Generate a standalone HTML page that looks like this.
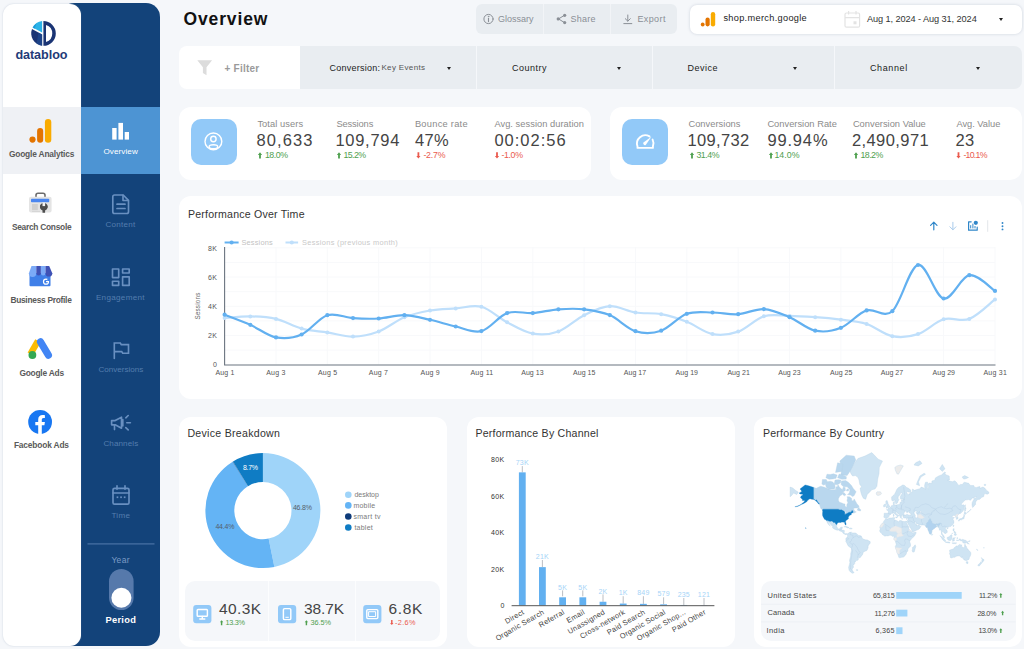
<!DOCTYPE html>
<html>
<head>
<meta charset="utf-8">
<title>Overview</title>
<style>
*{box-sizing:border-box;margin:0;padding:0}
html,body{width:1024px;height:649px;overflow:hidden}
body{background:#f5f7fa;font-family:"Liberation Sans",sans-serif;position:relative;color:#333}
.abs{position:absolute}
.t{position:absolute;white-space:nowrap;line-height:1}
.card{position:absolute;background:#fff;border-radius:12px}
/* sidebars */
#navblue{left:60px;top:3px;width:100px;height:643px;background:#13437a;border-radius:14px}
#navwhite{left:3px;top:4px;width:78px;height:642px;background:#fff;border-radius:11px;box-shadow:0 0 2px rgba(120,140,170,.35)}
#gaSel{left:3px;top:107px;width:78px;height:67px;background:#eff1f5}
#ovSel{left:81px;top:107px;width:79px;height:67px;background:#4d94d3}
.wl{font-size:7.5px;font-weight:bold;color:#555;text-align:center;width:78px;left:3px;letter-spacing:.1px}
.bl{font-size:7.5px;color:#4a6f9e;text-align:center;width:79px;left:81px;letter-spacing:.1px}
/* top */
#title{left:183px;top:10px;font-size:17.5px;font-weight:bold;color:#111;letter-spacing:.2px}
#btns{left:476px;top:4px;width:201px;height:30px;background:#e9edf1;border-radius:6px}
.bt{font-size:9px;color:#8a8f96;top:14.5px;letter-spacing:.15px}
#prop{left:690px;top:5px;width:332px;height:29px;background:#fff;border-radius:7px;box-shadow:0 0 3px rgba(150,165,185,.45)}
/* filter */
#fwhite{left:179px;top:46px;width:121px;height:43px;background:#fff;border-radius:8px 0 0 8px}
#fgrey{left:300px;top:46px;width:722px;height:43px;background:#e9edf1;border-radius:0 8px 8px 0}
.fl{font-size:9px;color:#333;top:63px;letter-spacing:.2px}
.caret{position:absolute;width:0;height:0;border-left:2.5px solid transparent;border-right:2.5px solid transparent;border-top:3px solid #222}
.fdiv{position:absolute;top:46px;width:1px;height:43px;background:#f5f7fa}
/* kpi */
.kl{font-size:8.5px;color:#8b8b8b;letter-spacing:.1px}
.kv{font-size:19px;color:#444;letter-spacing:.2px}
.kd{font-size:8px;letter-spacing:.1px}
.up{color:#4fa04f}.dn{color:#ea5a4e}
.tile{position:absolute;background:#92c9f8;border-radius:10px}
.ct{font-size:11px;color:#222;letter-spacing:.2px}
</style>
</head>
<body>
<!-- SIDEBARS -->
<div class="abs" id="navblue"></div>
<div class="abs" id="navwhite"></div>
<div class="abs" id="gaSel"></div>
<div class="abs" id="ovSel"></div>

<!-- TOP BAR -->
<div class="abs" id="btns"></div>
<div class="abs" style="left:542.5px;top:4px;width:1px;height:30px;background:#f2f4f7"></div>
<div class="abs" style="left:609.5px;top:4px;width:1px;height:30px;background:#f2f4f7"></div>
<div class="abs" id="prop"></div>

<!-- FILTER BAR -->
<div class="abs" id="fgrey"></div>
<div class="abs" id="fwhite"></div>
<div class="fdiv" style="left:476px"></div>
<div class="fdiv" style="left:652px"></div>
<div class="fdiv" style="left:834px"></div>
<div class="caret" style="left:447px;top:66.5px"></div>
<div class="caret" style="left:617px;top:66.5px"></div>
<div class="caret" style="left:793px;top:66.5px"></div>
<div class="caret" style="left:975.5px;top:66.5px"></div>
<div class="caret" style="left:998.5px;top:18px"></div>

<!-- KPI CARDS -->
<div class="card" style="left:179px;top:107px;width:412px;height:73px"></div>
<div class="card" style="left:610px;top:107px;width:412px;height:73px"></div>
<div class="tile" style="left:190.5px;top:119px;width:46px;height:46px"></div>
<div class="tile" style="left:621.7px;top:119px;width:46px;height:46px"></div>

<!-- LINE CHART CARD -->
<div class="card" style="left:179px;top:196px;width:843px;height:203px"></div>

<!-- BOTTOM CARDS -->
<div class="card" style="left:179px;top:417px;width:268px;height:229.5px"></div>
<div class="card" style="left:467px;top:417px;width:268px;height:229.5px"></div>
<div class="card" style="left:754px;top:417px;width:268px;height:229.5px"></div>
<div class="abs" style="left:184.7px;top:580.5px;width:255px;height:60.5px;background:#f5f7fa;border-radius:10px"></div>
<div class="abs" style="left:268.3px;top:580.5px;width:1px;height:60.5px;background:#fcfdfe"></div>
<div class="abs" style="left:354.6px;top:580.5px;width:1px;height:60.5px;background:#fcfdfe"></div>
<div class="abs" style="left:761px;top:580.5px;width:254.5px;height:60.5px;background:#f5f7fa;border-radius:10px"></div>

<svg class="abs" style="left:0;top:0" width="1024" height="649" viewBox="0 0 1024 649">
<!--ICONS-->
<!-- logo -->
<g>
<path d="M42.1 32.6 L42.1 21.09 A12.4 12.4 0 0 0 32.66 27.57 Z" fill="#2bb3e8"/>
<path d="M36.6 23.3 A12.4 12.4 0 0 0 32.66 27.57 L34.6 28.7 Z" fill="#1c9ad8"/>
<path d="M42.1 34.6 L32.00 29.02 A12.4 12.4 0 0 0 42.1 45.71 Z" fill="#1a3474"/>
<path d="M42.1 34.6 L42.1 45.71 A12.4 12.4 0 0 1 36.5 43.6 L 38.6 32.5 Z" fill="#1f4a92" opacity=".7"/>
<path d="M43.4 21.00 A12.4 12.4 0 0 1 43.4 45.80 Z M46 24.9 L46 41.9 A8.9 8.9 0 0 0 46 24.9 Z" fill="#1a3474" fill-rule="evenodd"/>
</g>
<!-- GA icon -->
<rect x="44.9" y="119" width="6.4" height="23.7" rx="3.2" fill="#f9ab00"/>
<rect x="37.1" y="128" width="6.1" height="14.7" rx="3" fill="#e37400"/>
<circle cx="32.5" cy="139.6" r="3.1" fill="#e37400"/>
<!-- overview icon -->
<rect x="112.2" y="128" width="4.4" height="11.6" fill="#fff"/>
<rect x="118.4" y="122.9" width="4.6" height="16.7" fill="#fff"/>
<rect x="124.7" y="132" width="4.3" height="7.6" fill="#fff"/>
<!-- search console -->
<g>
<path d="M36 197.5 v-2.2 a2 2 0 0 1 2 -2 h5 a2 2 0 0 1 2 2 v2.2" fill="none" stroke="#6d6d6d" stroke-width="1.6"/>
<rect x="29" y="196.8" width="22.6" height="15.8" rx="2" fill="#e4e4e4"/>
<rect x="31" y="198.8" width="18.2" height="3.4" rx=".8" fill="#4a86f0"/>
<rect x="32" y="204" width="5.8" height="6.2" fill="#cfcfcf"/>
<rect x="32" y="211" width="8" height="1" fill="#d6d6d6"/>
<path d="M40.2 205.2 a3.7 3.7 0 0 0 2.3 4.6 v3 h2.6 v-3 a3.7 3.7 0 0 0 2.3 -4.6 l-1.6 2.2 h-2.2 l-0.7-1.5 l-1-1.5z" fill="#4d4d4d"/>
<circle cx="43.8" cy="206.7" r="3.7" fill="#4d4d4d"/>
<rect x="42.5" y="202.5" width="2.6" height="3.6" fill="#f2f2f2"/>
</g>
<!-- business profile -->
<g>
<rect x="29.5" y="273" width="21" height="13.3" rx="1" fill="#3f7fe8"/>
<path d="M31.5 266 h4.8 v7.2 a2.6 2.6 0 0 1 -7.4 0 z" fill="#7baaf7"/>
<path d="M36.3 266 h4.6 v7.2 a2.3 2.3 0 0 1 -4.6 0z" fill="#3f51b5"/>
<path d="M40.9 266 h4.6 v7.2 a2.3 2.3 0 0 1 -4.6 0z" fill="#7baaf7"/>
<path d="M45.5 266 h3.7 l3.1 7.2 a2.6 2.6 0 0 1 -6.8 0z" fill="#3f51b5"/>
<circle cx="46" cy="281.7" r="2.5" fill="none" stroke="#fff" stroke-width="1.2"/>
<rect x="46" y="281" width="3" height="1.2" fill="#fff"/>
<rect x="47.3" y="279" width="2" height="2" fill="#3f7fe8"/>
</g>
<!-- google ads -->
<g>
<path d="M38 340.8 L30.4 354" stroke="#fbbc04" stroke-width="6.4" stroke-linecap="butt"/>
<path d="M40.5 341.8 L48.4 355.2" stroke="#4285f4" stroke-width="7.2" stroke-linecap="round"/>
<circle cx="32.4" cy="355" r="3.9" fill="#34a853"/>
</g>
<!-- facebook -->
<circle cx="40.1" cy="422" r="11.9" fill="#1877f2"/>
<path d="M38.2 433.9 v-8.6 h-2.9 v-3.3 h2.9 v-2.5 c0-2.9 1.7-4.5 4.4-4.5 c1.2 0 2.3 .2 2.3 .2 v2.7 h-1.3 c-1.4 0-1.8 .9-1.8 1.8 v2.3 h3.1 l-.5 3.3 h-2.6 v8.6z" fill="#fff"/>
<!-- blue sidebar icons -->
<g fill="none" stroke="#6990c1" stroke-width="1.65" stroke-linejoin="round" stroke-linecap="round">
<!-- content -->
<path d="M114.6 195 h8.6 l5.3 5.3 v11.4 a1.8 1.8 0 0 1 -1.8 1.8 h-12.1 a1.8 1.8 0 0 1 -1.8 -1.8 v-14.9 a1.8 1.8 0 0 1 1.8 -1.8z"/>
<path d="M123 195.3 v5.2 h5.3"/>
<path d="M117 204.2 h8 M117 208.5 h8" stroke-width="1.7"/>
<!-- engagement -->
<rect x="112.5" y="269" width="6.2" height="8.6"/>
<rect x="122.6" y="269" width="6.6" height="4"/>
<rect x="112.5" y="281.2" width="6.2" height="4.2"/>
<rect x="122.6" y="276.8" width="6.6" height="8.6"/>
<!-- flag -->
<path d="M114.3 358.5 v-15.5 h6 l1 1.6 h7.2 v8.6 h-5.8 l-1-1.6 h-7.2" stroke-linejoin="miter"/>
<!-- megaphone -->
<path d="M111.6 420.6 h3.6 l6.3 -3.4 v11 l-6.3 -3.4 h-3.6 z"/>
<path d="M114.5 425 v4.6 M122.8 419.6 v6.4" />
<path d="M125.8 417.8 l2.4 -2.3 M126.8 422.7 h3.6 M125.8 427.6 l2.4 2.3"/>
<!-- calendar -->
<rect x="113" y="488.3" width="16" height="15.9" rx="1.5"/>
<path d="M113 493 h16 M117 485.8 v3.4 M125 485.8 v3.4"/>
</g>
<g fill="#6990c1"><rect x="116.6" y="496.4" width="1.7" height="1.7"/><rect x="120.2" y="496.4" width="1.7" height="1.7"/><rect x="123.8" y="496.4" width="1.7" height="1.7"/></g>
<!-- divider + toggle -->
<rect x="87.5" y="543.3" width="67" height="1.2" fill="#4a73a6"/>
<rect x="109" y="569" width="24.6" height="41" rx="12.3" fill="#5679ab"/>
<circle cx="121.4" cy="597.8" r="10" fill="#fff"/>
<!-- top bar icons -->
<g fill="none" stroke="#8a8f96" stroke-width="1" stroke-linecap="round" stroke-linejoin="round">
<circle cx="488.5" cy="19" r="4.6"/>
<path d="M488.5 18.4 v3.2" stroke-width="1.1"/>
<circle cx="488.5" cy="16.5" r=".35" stroke-width=".8"/>
<path d="M563.9 15.6 L558.6 18.9 L563.9 22.3" />
<path d="M627.8 15 v6 M625.3 18.7 l2.5 2.5 l2.5 -2.5 M623.8 23.6 h8" />
</g>
<g fill="#8a8f96"><circle cx="564.7" cy="15.3" r="1.6"/><circle cx="558.2" cy="18.9" r="1.6"/><circle cx="564.7" cy="22.6" r="1.6"/></g>
<!-- GA small -->
<rect x="710.8" y="12" width="4.4" height="14.4" rx="2.2" fill="#f9ab00"/>
<rect x="705.5" y="17.5" width="4.2" height="8.9" rx="2.1" fill="#e37400"/>
<circle cx="702.7" cy="24.5" r="1.9" fill="#e37400"/>
<!-- calendar light -->
<g fill="none" stroke="#e3e3e3" stroke-width="1.2"><rect x="845" y="13" width="14.6" height="14.2" rx="1.5"/><path d="M845 17.6 h14.6 M848.6 11 v3.4 M856 11 v3.4"/></g>
<rect x="853.5" y="21.3" width="3" height="3" fill="#e3e3e3"/>
<!-- funnel -->
<path d="M197.3 60.3 h14.8 l-5.6 7 v8 l-3.6 -2.2 v-5.8z" fill="#dcdcdc"/>
<!-- KPI icons -->
<g fill="none" stroke="#fff" stroke-width="1.4" stroke-linecap="round">
<circle cx="213.4" cy="141.4" r="8.4"/>
<circle cx="213.4" cy="139" r="2.7"/>
<ellipse cx="213.4" cy="146.7" rx="4.3" ry="2"/>
</g>
<g fill="none" stroke="#fff" stroke-width="1.9" stroke-linecap="round" stroke-linejoin="round">
<path d="M649.5 136.4 A8.3 8.3 0 0 0 637.5 146.4 V147.9 H652.9 V146.4 A8.3 8.3 0 0 0 652.6 139.6"/>
</g>
<path d="M643.4 142.6 L651.4 136.8 L645.7 144.9 A1.7 1.7 0 0 1 643.4 142.6Z" fill="#fff"/>
<!-- KPI arrows -->
<!-- country table -->
<rect x="896.2" y="592" width="65.5" height="6.8" fill="#9fd4f9"/>
<rect x="896.2" y="609.7" width="11.2" height="6.8" fill="#9fd4f9"/>
<rect x="896.2" y="627.3" width="6.3" height="6.8" fill="#9fd4f9"/>
<rect x="761" y="603.8" width="254.5" height=".8" fill="#eceff3"/>
<rect x="761" y="621.5" width="254.5" height=".8" fill="#eceff3"/>
<path d="M260.0 152.3 l2.10 2.60 h-1.20 v3.60 h-1.80 v-3.60 h-1.20 z" fill="#4fa04f"/><path d="M339.0 152.3 l2.10 2.60 h-1.20 v3.60 h-1.80 v-3.60 h-1.20 z" fill="#4fa04f"/><path d="M692.0 152.3 l2.10 2.60 h-1.20 v3.60 h-1.80 v-3.60 h-1.20 z" fill="#4fa04f"/><path d="M771.0 152.3 l2.10 2.60 h-1.20 v3.60 h-1.80 v-3.60 h-1.20 z" fill="#4fa04f"/><path d="M856.0 152.3 l2.10 2.60 h-1.20 v3.60 h-1.80 v-3.60 h-1.20 z" fill="#4fa04f"/><path d="M418.4 158.5 l2.10 -2.60 h-1.20 v-3.60 h-1.80 v3.60 h-1.20 z" fill="#ea5a4e"/><path d="M497.0 158.5 l2.10 -2.60 h-1.20 v-3.60 h-1.80 v3.60 h-1.20 z" fill="#ea5a4e"/><path d="M958.5 158.5 l2.10 -2.60 h-1.20 v-3.60 h-1.80 v3.60 h-1.20 z" fill="#ea5a4e"/><path d="M221.6 620.2 l1.68 2.08 h-0.96 v2.88 h-1.44 v-2.88 h-0.96 z" fill="#4fa04f"/><path d="M306.4 620.2 l1.68 2.08 h-0.96 v2.88 h-1.44 v-2.88 h-0.96 z" fill="#4fa04f"/><path d="M391.8 625.0 l1.68 -2.08 h-0.96 v-2.88 h-1.44 v2.88 h-0.96 z" fill="#ea5a4e"/><path d="M1000.8 593.0 l1.58 1.95 h-0.90 v2.70 h-1.35 v-2.70 h-0.90 z" fill="#4fa04f"/><path d="M1002.6 610.7 l1.58 1.95 h-0.90 v2.70 h-1.35 v-2.70 h-0.90 z" fill="#4fa04f"/><path d="M1000.8 628.3 l1.58 1.95 h-0.90 v2.70 h-1.35 v-2.70 h-0.90 z" fill="#4fa04f"/>
<!--/ICONS-->
<!--CHART-->
<!-- grid -->
<g stroke="#f8f9fb" stroke-width="1"><path d="M225 247.8 H995"/><path d="M225 262.4 H995"/><path d="M225 277.0 H995"/><path d="M225 291.7 H995"/><path d="M225 306.3 H995"/><path d="M225 320.9 H995"/><path d="M225 335.5 H995"/><path d="M225 350.1 H995"/><path d="M276.0 247 V364.5"/><path d="M327.3 247 V364.5"/><path d="M378.7 247 V364.5"/><path d="M430.0 247 V364.5"/><path d="M481.4 247 V364.5"/><path d="M532.8 247 V364.5"/><path d="M584.1 247 V364.5"/><path d="M635.5 247 V364.5"/><path d="M686.8 247 V364.5"/><path d="M738.2 247 V364.5"/><path d="M789.6 247 V364.5"/><path d="M840.9 247 V364.5"/><path d="M892.3 247 V364.5"/><path d="M943.6 247 V364.5"/><path d="M995.0 247 V364.5"/></g>
<path d="M224.6 247 V365 H995.5" fill="none" stroke="#6b7480" stroke-width="1.1"/>
<path d="M224.6 242.5 h14" stroke="#62b0f0" stroke-width="2"/><circle cx="231.6" cy="242.5" r="2.1" fill="#62b0f0"/><path d="M285.5 242.5 h12.6" stroke="#bfdffb" stroke-width="2"/><circle cx="291.8" cy="242.5" r="2.1" fill="#bfdffb"/>
<path d="M224.6 318.1 C228.9 317.8 241.7 316.3 250.3 316.4 C258.8 316.5 267.4 316.9 276.0 318.9 C284.5 320.9 293.1 326.4 301.6 328.6 C310.2 330.9 318.8 331.1 327.3 332.4 C335.9 333.7 344.4 336.8 353.0 336.6 C361.6 336.5 370.1 334.7 378.7 331.5 C387.2 328.3 395.8 320.8 404.4 317.3 C412.9 313.8 421.5 312.0 430.0 310.5 C438.6 309.0 447.2 309.0 455.7 308.4 C464.3 307.8 472.8 304.5 481.4 306.8 C490.0 309.1 498.5 317.8 507.1 322.3 C515.6 326.8 524.2 332.1 532.8 333.6 C541.3 335.1 549.9 334.6 558.4 331.5 C567.0 328.4 575.6 319.4 584.1 315.2 C592.7 311.0 601.2 306.6 609.8 306.2 C618.4 305.8 626.9 311.2 635.5 312.5 C644.0 313.8 652.6 312.6 661.2 314.2 C669.7 315.8 678.3 318.5 686.8 321.8 C695.4 325.1 704.0 332.5 712.5 334.1 C721.1 335.7 729.6 334.6 738.2 331.6 C746.8 328.6 755.3 318.9 763.9 316.3 C772.4 313.7 781.0 315.8 789.6 315.9 C798.1 316.0 806.7 316.6 815.2 317.2 C823.8 317.8 832.4 318.6 840.9 319.7 C849.5 320.8 858.0 321.2 866.6 324.0 C875.2 326.8 883.7 334.5 892.3 336.2 C900.8 337.9 909.4 336.9 918.0 334.1 C926.5 331.3 935.1 321.8 943.6 319.3 C952.2 316.8 960.8 322.2 969.3 318.9 C977.9 315.6 990.7 302.6 995.0 299.4" fill="none" stroke="#bfdffb" stroke-width="2.2" stroke-linecap="round"/><circle cx="224.6" cy="318.1" r="2.0" fill="#bfdffb"/><circle cx="250.3" cy="316.4" r="2.0" fill="#bfdffb"/><circle cx="276.0" cy="318.9" r="2.0" fill="#bfdffb"/><circle cx="301.6" cy="328.6" r="2.0" fill="#bfdffb"/><circle cx="327.3" cy="332.4" r="2.0" fill="#bfdffb"/><circle cx="353.0" cy="336.6" r="2.0" fill="#bfdffb"/><circle cx="378.7" cy="331.5" r="2.0" fill="#bfdffb"/><circle cx="404.4" cy="317.3" r="2.0" fill="#bfdffb"/><circle cx="430.0" cy="310.5" r="2.0" fill="#bfdffb"/><circle cx="455.7" cy="308.4" r="2.0" fill="#bfdffb"/><circle cx="481.4" cy="306.8" r="2.0" fill="#bfdffb"/><circle cx="507.1" cy="322.3" r="2.0" fill="#bfdffb"/><circle cx="532.8" cy="333.6" r="2.0" fill="#bfdffb"/><circle cx="558.4" cy="331.5" r="2.0" fill="#bfdffb"/><circle cx="584.1" cy="315.2" r="2.0" fill="#bfdffb"/><circle cx="609.8" cy="306.2" r="2.0" fill="#bfdffb"/><circle cx="635.5" cy="312.5" r="2.0" fill="#bfdffb"/><circle cx="661.2" cy="314.2" r="2.0" fill="#bfdffb"/><circle cx="686.8" cy="321.8" r="2.0" fill="#bfdffb"/><circle cx="712.5" cy="334.1" r="2.0" fill="#bfdffb"/><circle cx="738.2" cy="331.6" r="2.0" fill="#bfdffb"/><circle cx="763.9" cy="316.3" r="2.0" fill="#bfdffb"/><circle cx="789.6" cy="315.9" r="2.0" fill="#bfdffb"/><circle cx="815.2" cy="317.2" r="2.0" fill="#bfdffb"/><circle cx="840.9" cy="319.7" r="2.0" fill="#bfdffb"/><circle cx="866.6" cy="324.0" r="2.0" fill="#bfdffb"/><circle cx="892.3" cy="336.2" r="2.0" fill="#bfdffb"/><circle cx="918.0" cy="334.1" r="2.0" fill="#bfdffb"/><circle cx="943.6" cy="319.3" r="2.0" fill="#bfdffb"/><circle cx="969.3" cy="318.9" r="2.0" fill="#bfdffb"/><circle cx="995.0" cy="299.4" r="2.0" fill="#bfdffb"/><path d="M224.6 314.7 C228.9 316.4 241.7 321.0 250.3 324.8 C258.8 328.6 267.4 335.8 276.0 337.4 C284.5 339.0 293.1 338.2 301.6 334.5 C310.2 330.8 318.8 317.9 327.3 315.2 C335.9 312.5 344.4 317.6 353.0 318.1 C361.6 318.7 370.1 319.0 378.7 318.5 C387.2 318.0 395.8 315.0 404.4 315.2 C412.9 315.4 421.5 317.9 430.0 319.8 C438.6 321.7 447.2 324.6 455.7 326.5 C464.3 328.4 472.8 333.3 481.4 331.1 C490.0 328.9 498.5 316.1 507.1 313.1 C515.6 310.1 524.2 313.7 532.8 313.1 C541.3 312.5 549.9 309.9 558.4 309.3 C567.0 308.7 575.6 308.3 584.1 309.3 C592.7 310.3 601.2 311.5 609.8 315.1 C618.4 318.8 626.9 328.6 635.5 331.2 C644.0 333.8 652.6 333.6 661.2 330.7 C669.7 327.8 678.3 316.8 686.8 313.8 C695.4 310.8 704.0 312.4 712.5 312.5 C721.1 312.6 729.6 314.8 738.2 314.2 C746.8 313.6 755.3 308.6 763.9 309.1 C772.4 309.6 781.0 313.6 789.6 317.2 C798.1 320.8 806.7 328.9 815.2 330.7 C823.8 332.5 832.4 331.2 840.9 327.8 C849.5 324.4 858.0 313.2 866.6 310.4 C875.2 307.6 883.7 318.8 892.3 311.2 C900.8 303.6 909.4 267.1 918.0 265.0 C926.5 262.9 935.1 296.8 943.6 298.5 C952.2 300.2 960.8 276.5 969.3 275.2 C977.9 273.9 990.7 288.3 995.0 290.9" fill="none" stroke="#62b0f0" stroke-width="2.2" stroke-linecap="round"/><circle cx="224.6" cy="314.7" r="2.1" fill="#62b0f0"/><circle cx="250.3" cy="324.8" r="2.1" fill="#62b0f0"/><circle cx="276.0" cy="337.4" r="2.1" fill="#62b0f0"/><circle cx="301.6" cy="334.5" r="2.1" fill="#62b0f0"/><circle cx="327.3" cy="315.2" r="2.1" fill="#62b0f0"/><circle cx="353.0" cy="318.1" r="2.1" fill="#62b0f0"/><circle cx="378.7" cy="318.5" r="2.1" fill="#62b0f0"/><circle cx="404.4" cy="315.2" r="2.1" fill="#62b0f0"/><circle cx="430.0" cy="319.8" r="2.1" fill="#62b0f0"/><circle cx="455.7" cy="326.5" r="2.1" fill="#62b0f0"/><circle cx="481.4" cy="331.1" r="2.1" fill="#62b0f0"/><circle cx="507.1" cy="313.1" r="2.1" fill="#62b0f0"/><circle cx="532.8" cy="313.1" r="2.1" fill="#62b0f0"/><circle cx="558.4" cy="309.3" r="2.1" fill="#62b0f0"/><circle cx="584.1" cy="309.3" r="2.1" fill="#62b0f0"/><circle cx="609.8" cy="315.1" r="2.1" fill="#62b0f0"/><circle cx="635.5" cy="331.2" r="2.1" fill="#62b0f0"/><circle cx="661.2" cy="330.7" r="2.1" fill="#62b0f0"/><circle cx="686.8" cy="313.8" r="2.1" fill="#62b0f0"/><circle cx="712.5" cy="312.5" r="2.1" fill="#62b0f0"/><circle cx="738.2" cy="314.2" r="2.1" fill="#62b0f0"/><circle cx="763.9" cy="309.1" r="2.1" fill="#62b0f0"/><circle cx="789.6" cy="317.2" r="2.1" fill="#62b0f0"/><circle cx="815.2" cy="330.7" r="2.1" fill="#62b0f0"/><circle cx="840.9" cy="327.8" r="2.1" fill="#62b0f0"/><circle cx="866.6" cy="310.4" r="2.1" fill="#62b0f0"/><circle cx="892.3" cy="311.2" r="2.1" fill="#62b0f0"/><circle cx="918.0" cy="265.0" r="2.1" fill="#62b0f0"/><circle cx="943.6" cy="298.5" r="2.1" fill="#62b0f0"/><circle cx="969.3" cy="275.2" r="2.1" fill="#62b0f0"/><circle cx="995.0" cy="290.9" r="2.1" fill="#62b0f0"/>
<text x="0" y="0" transform="translate(199.6 306) rotate(-90)" text-anchor="middle" font-family="Liberation Sans, sans-serif" font-size="6.3" fill="#666" letter-spacing=".2">Sessions</text>
<g fill="none" stroke="#2f86c9" stroke-width="1.2" stroke-linecap="round" stroke-linejoin="round">
<path d="M933.8 229.8 v-7.4 M930.6 225.4 l3.2 -3.2 l3.2 3.2"/>
<path d="M952.9 222.3 v7.4 M949.9 226.8 l3 3 l3 -3" stroke="#a9cbec" stroke-width="1"/>
<path d="M971.2 221.8 h-2.6 v8.4 h8.6 v-3"/>
<path d="M970.7 228 v-2.4 M972.9 228 v-4 M975 228 v-1.6" stroke-width="1"/>
</g>
<circle cx="975.8" cy="222.8" r="2.1" fill="#2f86c9"/>
<rect x="987.2" y="220.2" width="1" height="11.6" fill="#e3e6ea"/>
<g fill="#2f86c9"><circle cx="1002.5" cy="223" r=".95"/><circle cx="1002.5" cy="226.2" r=".95"/><circle cx="1002.5" cy="229.4" r=".95"/></g>

<!--/CHART-->
<!--DONUT-->
<path d="M262.90 453.10 A57.5 57.5 0 0 1 274.38 566.94 L268.61 538.62 A28.6 28.6 0 0 0 262.90 482.00 Z" fill="#9fd4f9"/><path d="M274.38 566.94 A57.5 57.5 0 0 1 232.70 461.67 L247.88 486.26 A28.6 28.6 0 0 0 268.61 538.62 Z" fill="#64b4f5"/><path d="M232.70 461.67 A57.5 57.5 0 0 1 233.01 461.48 L248.03 486.17 A28.6 28.6 0 0 0 247.88 486.26 Z" fill="#0d3b7a"/><path d="M233.01 461.48 A57.5 57.5 0 0 1 262.90 453.10 L262.90 482.00 A28.6 28.6 0 0 0 248.03 486.17 Z" fill="#0f7cc4"/><circle cx="348.3" cy="494.7" r="3.3" fill="#9fd4f9"/><circle cx="348.3" cy="505.4" r="3.3" fill="#64b4f5"/><circle cx="348.3" cy="516.5" r="3.3" fill="#0d3b7a"/><circle cx="348.3" cy="527.5" r="3.3" fill="#0f7cc4"/><rect x="193.2" y="605" width="18.2" height="18.2" rx="3" fill="#92c9f8"/><rect x="278.0" y="605" width="18.2" height="18.2" rx="3" fill="#92c9f8"/><rect x="363.2" y="605" width="18.2" height="18.2" rx="3" fill="#92c9f8"/><g fill="none" stroke="#fff" stroke-width="1.45" stroke-linejoin="round" stroke-linecap="round">
<rect x="197.2" y="609.4" width="10.2" height="6.8" rx=".8"/><path d="M202.3 616.4 v2.2 M199.8 618.9 h5"/>
<rect x="283.4" y="608.6" width="7.4" height="11" rx="1.2"/><path d="M285.8 617.3 h2.6" stroke-width="1"/>
<rect x="366.8" y="609.6" width="11" height="9" rx="1"/><rect x="369" y="611.7" width="6.6" height="4.8" stroke-width="1"/>
</g>
<!--/DONUT-->
<!--BARS-->
<g><path d="M522.3 466.1 V472.4" stroke="#b3b7bc" stroke-width=".9"/><rect x="518.9" y="472.36" width="6.8" height="133.04" fill="#62b0f0"/><text x="522.3" y="465.2" text-anchor="middle" font-family="Liberation Sans, sans-serif" font-size="7" fill="#a6d4f7" letter-spacing=".2">73K</text><text transform="translate(524.8 613.5) rotate(-30)" text-anchor="end" font-family="Liberation Sans, sans-serif" font-size="7.4" fill="#444" letter-spacing=".25">Direct</text><path d="M542.4 560.0 V567.1" stroke="#b3b7bc" stroke-width=".9"/><rect x="539.0" y="567.13" width="6.8" height="38.27" fill="#62b0f0"/><text x="542.4" y="559.1" text-anchor="middle" font-family="Liberation Sans, sans-serif" font-size="7" fill="#a6d4f7" letter-spacing=".2">21K</text><text transform="translate(544.9 613.5) rotate(-30)" text-anchor="end" font-family="Liberation Sans, sans-serif" font-size="7.4" fill="#444" letter-spacing=".25">Organic Search</text><path d="M562.6 590.4 V596.3" stroke="#b3b7bc" stroke-width=".9"/><rect x="559.2" y="597.30" width="6.8" height="8.10" fill="#62b0f0"/><text x="562.6" y="589.5" text-anchor="middle" font-family="Liberation Sans, sans-serif" font-size="7" fill="#a6d4f7" letter-spacing=".2">5K</text><text transform="translate(565.1 613.5) rotate(-30)" text-anchor="end" font-family="Liberation Sans, sans-serif" font-size="7.4" fill="#444" letter-spacing=".25">Referral</text><path d="M582.8 590.4 V596.3" stroke="#b3b7bc" stroke-width=".9"/><rect x="579.4" y="597.30" width="6.8" height="8.10" fill="#62b0f0"/><text x="582.8" y="589.5" text-anchor="middle" font-family="Liberation Sans, sans-serif" font-size="7" fill="#a6d4f7" letter-spacing=".2">5K</text><text transform="translate(585.3 613.5) rotate(-30)" text-anchor="end" font-family="Liberation Sans, sans-serif" font-size="7.4" fill="#444" letter-spacing=".25">Email</text><path d="M603.0 594.4 V601.8" stroke="#b3b7bc" stroke-width=".9"/><rect x="599.6" y="601.75" width="6.8" height="3.65" fill="#62b0f0"/><text x="603.0" y="593.5" text-anchor="middle" font-family="Liberation Sans, sans-serif" font-size="7" fill="#a6d4f7" letter-spacing=".2">2K</text><text transform="translate(605.5 613.5) rotate(-30)" text-anchor="end" font-family="Liberation Sans, sans-serif" font-size="7.4" fill="#444" letter-spacing=".25">Unassigned</text><path d="M623.2 596.2 V603.6" stroke="#b3b7bc" stroke-width=".9"/><rect x="619.8" y="603.58" width="6.8" height="1.82" fill="#62b0f0"/><text x="623.2" y="595.3" text-anchor="middle" font-family="Liberation Sans, sans-serif" font-size="7" fill="#a6d4f7" letter-spacing=".2">1K</text><text transform="translate(625.7 613.5) rotate(-30)" text-anchor="end" font-family="Liberation Sans, sans-serif" font-size="7.4" fill="#444" letter-spacing=".25">Cross-network</text><path d="M643.4 596.2 V603.9" stroke="#b3b7bc" stroke-width=".9"/><rect x="640.0" y="603.85" width="6.8" height="1.55" fill="#62b0f0"/><text x="643.4" y="595.3" text-anchor="middle" font-family="Liberation Sans, sans-serif" font-size="7" fill="#a6d4f7" letter-spacing=".2">849</text><text transform="translate(645.9 613.5) rotate(-30)" text-anchor="end" font-family="Liberation Sans, sans-serif" font-size="7.4" fill="#444" letter-spacing=".25">Paid Search</text><path d="M663.6 597.3 V604.3" stroke="#b3b7bc" stroke-width=".9"/><rect x="660.2" y="604.34" width="6.8" height="1.06" fill="#62b0f0"/><text x="663.6" y="596.4" text-anchor="middle" font-family="Liberation Sans, sans-serif" font-size="7" fill="#a6d4f7" letter-spacing=".2">579</text><text transform="translate(666.1 613.5) rotate(-30)" text-anchor="end" font-family="Liberation Sans, sans-serif" font-size="7.4" fill="#444" letter-spacing=".25">Organic Social</text><path d="M683.8 598.0 V605.0" stroke="#b3b7bc" stroke-width=".9"/><rect x="680.4" y="604.97" width="6.8" height="0.43" fill="#62b0f0"/><text x="683.8" y="597.1" text-anchor="middle" font-family="Liberation Sans, sans-serif" font-size="7" fill="#a6d4f7" letter-spacing=".2">235</text><text transform="translate(686.3 613.5) rotate(-30)" text-anchor="end" font-family="Liberation Sans, sans-serif" font-size="7.4" fill="#444" letter-spacing=".25">Organic Shop...</text><path d="M704.0 598.0 V605.2" stroke="#b3b7bc" stroke-width=".9"/><rect x="700.6" y="605.18" width="6.8" height="0.22" fill="#62b0f0"/><text x="704.0" y="597.1" text-anchor="middle" font-family="Liberation Sans, sans-serif" font-size="7" fill="#a6d4f7" letter-spacing=".2">121</text><text transform="translate(706.5 613.5) rotate(-30)" text-anchor="end" font-family="Liberation Sans, sans-serif" font-size="7.4" fill="#444" letter-spacing=".25">Paid Other</text></g><path d="M511.6 605.7 H714.4" stroke="#555" stroke-width="1"/>
<!--/BARS-->
<!--MAP-->
<g stroke="#b4d0e6" stroke-width=".35" stroke-linejoin="round"><path d="M826.4 520.6 L827.6 520.6 L829.6 521.3 L831.1 521.3 L831.1 521.0 L832.0 521.0 L833.0 522.0 L833.9 522.7 L834.9 522.3 L835.9 524.2 L836.9 524.5 L836.7 526.5 L837.6 528.3 L838.4 528.9 L840.0 528.7 L840.6 527.3 L842.4 527.0 L842.2 528.4 L841.7 529.1 L841.5 530.1 L843.0 530.1 L844.4 530.6 L844.2 532.7 L845.0 533.7 L846.2 533.7 L847.2 533.6 L847.6 534.1 L847.5 534.6 L847.0 534.1 L846.0 534.7 L844.7 534.2 L843.1 533.3 L842.2 531.7 L840.0 531.1 L838.4 530.0 L837.1 530.2 L834.7 529.3 L832.6 527.9 L832.7 526.5 L831.0 524.8 L828.8 522.4 L827.7 521.2 L827.8 522.1 L828.8 523.8 L829.9 525.5 L830.4 526.2 L829.1 525.1 L827.6 523.3 L827.0 521.8Z" fill="#cfe4f3"/><path d="M843.8 526.8 L846.2 526.2 L848.9 527.6 L849.2 527.9 L847.5 527.9 L845.1 526.8Z" fill="#cfe4f3"/><path d="M849.2 528.7 L850.5 527.9 L852.3 528.6 L851.0 529.1Z" fill="#cfe4f3"/><path d="M849.9 470.9 L853.7 464.4 L857.9 458.5 L864.9 456.1 L871.8 452.6 L878.2 459.2 L882.5 461.1 L879.3 467.4 L879.0 473.8 L877.7 479.1 L877.2 483.6 L876.9 486.3 L875.0 489.0 L871.8 489.7 L869.1 492.7 L867.3 494.2 L866.2 497.7 L865.7 499.3 L864.6 498.9 L863.3 498.2 L861.9 495.4 L860.9 492.4 L860.1 488.3 L861.7 486.8 L859.8 484.4 L859.0 480.0 L857.7 477.1 L855.3 475.6 L852.6 476.0 L851.0 473.8Z" fill="#cfe4f3"/><path d="M847.6 534.1 L848.6 532.9 L850.5 532.1 L850.7 532.7 L851.5 532.2 L852.6 533.0 L854.7 532.9 L855.8 533.0 L856.9 534.1 L858.5 535.4 L860.1 535.5 L861.4 536.3 L862.2 538.2 L863.3 539.0 L865.1 539.8 L867.5 540.0 L869.1 541.1 L870.2 541.6 L870.2 543.2 L869.1 544.5 L868.1 545.9 L868.1 547.7 L867.3 549.7 L866.5 550.8 L864.9 551.2 L863.0 552.5 L862.9 554.0 L861.1 556.4 L860.1 557.8 L858.5 557.8 L857.7 557.3 L858.5 558.9 L857.9 560.2 L855.8 560.6 L855.5 561.9 L854.2 561.9 L854.9 563.1 L853.9 564.8 L852.9 565.7 L853.7 567.0 L852.1 569.0 L852.4 570.6 L854.1 572.7 L852.3 573.3 L850.5 572.0 L849.1 570.3 L848.6 567.4 L849.4 564.4 L849.9 562.5 L849.5 560.6 L849.9 558.9 L850.7 556.1 L850.7 553.7 L851.4 550.8 L851.4 548.2 L849.9 547.2 L848.2 545.9 L847.2 544.0 L846.3 542.1 L845.5 541.1 L846.2 540.2 L845.6 539.0 L846.2 538.1 L846.8 537.7 L847.6 536.4 L847.5 534.6Z" fill="#cfe4f3"/><path d="M856.3 569.7 L857.9 569.8 L857.7 570.4 L856.3 570.3Z" fill="#cfe4f3"/><path d="M885.7 518.5 L887.8 519.0 L889.4 518.1 L891.6 517.9 L894.2 517.6 L894.8 517.8 L894.2 519.5 L894.8 520.1 L896.9 520.7 L899.0 522.0 L899.6 520.6 L901.2 520.6 L902.2 521.2 L904.4 521.6 L906.0 521.3 L907.2 521.4 L906.3 522.2 L907.1 523.9 L907.9 525.6 L908.7 527.3 L908.8 528.5 L909.7 530.1 L910.8 531.0 L911.9 531.9 L912.4 533.0 L914.0 532.6 L916.1 532.3 L916.1 533.1 L915.1 534.9 L914.3 536.2 L912.9 537.5 L911.3 539.0 L910.5 540.0 L909.7 541.4 L910.0 542.7 L910.5 544.0 L910.5 546.1 L909.2 547.6 L907.9 548.8 L907.9 551.1 L906.4 552.4 L906.4 553.7 L905.2 555.5 L903.6 557.0 L901.7 557.3 L899.6 557.8 L898.7 557.3 L898.5 556.1 L897.7 554.1 L896.9 552.5 L896.6 550.5 L895.5 548.0 L895.3 546.4 L896.2 544.8 L895.9 543.2 L895.5 541.6 L895.0 540.6 L893.9 539.3 L894.0 537.7 L894.1 536.5 L893.4 536.2 L892.1 536.3 L891.3 535.2 L889.7 535.3 L887.8 535.9 L886.5 535.8 L884.9 536.2 L883.8 535.4 L882.2 534.4 L881.7 533.5 L880.9 532.7 L880.0 531.9 L879.6 530.8 L880.1 529.8 L880.2 528.2 L879.8 527.3 L880.4 525.9 L881.2 524.5 L882.0 523.5 L883.6 522.4 L883.7 521.2 L884.9 519.9Z" fill="#cfe4f3"/><path d="M915.2 544.8 L915.8 546.7 L915.3 548.0 L914.3 551.8 L912.9 552.2 L912.1 550.8 L912.6 549.1 L912.4 547.5 L913.7 546.7 L914.5 545.6Z" fill="#cfe4f3"/><path d="M884.1 517.8 L883.8 516.6 L884.2 515.1 L884.0 513.5 L884.6 513.2 L887.0 513.3 L888.1 513.3 L888.3 511.5 L887.6 510.5 L886.4 509.7 L888.1 509.4 L888.0 508.6 L889.7 508.3 L890.2 507.5 L891.0 506.7 L891.6 505.6 L892.6 505.4 L893.5 505.1 L893.3 503.7 L893.3 502.3 L894.5 501.6 L894.4 503.2 L894.2 504.6 L894.8 505.0 L896.4 505.0 L898.8 504.4 L900.1 503.9 L900.1 502.3 L901.7 502.1 L901.4 500.1 L903.9 499.6 L904.7 499.3 L902.2 499.1 L900.9 499.3 L900.3 498.2 L900.4 496.2 L902.0 493.9 L902.4 493.0 L900.6 492.6 L900.3 494.2 L898.2 496.8 L898.1 498.4 L898.9 499.5 L897.8 501.8 L897.4 503.0 L896.5 503.7 L895.7 503.7 L895.6 502.7 L894.9 500.8 L894.5 500.0 L893.3 501.1 L891.9 500.6 L891.6 498.7 L891.6 497.1 L893.2 495.4 L894.8 493.9 L895.8 491.7 L896.9 489.3 L898.5 487.5 L900.4 486.5 L902.6 485.1 L904.1 485.2 L905.5 486.3 L906.5 487.5 L908.1 488.0 L910.8 490.1 L910.5 492.0 L909.2 492.2 L907.1 491.5 L906.6 492.0 L907.5 494.2 L908.9 494.8 L908.9 493.6 L910.3 494.0 L910.3 492.4 L912.4 492.0 L912.4 489.0 L913.7 489.7 L914.5 490.3 L917.5 489.3 L919.6 488.9 L921.2 487.1 L923.3 487.8 L925.5 489.3 L924.7 487.5 L924.6 485.2 L925.5 482.2 L927.6 482.2 L927.7 485.2 L927.3 488.3 L928.3 489.0 L928.6 486.0 L928.1 483.9 L929.2 483.1 L930.6 483.3 L931.9 483.3 L931.9 481.0 L934.8 480.2 L935.4 477.9 L938.6 476.0 L941.5 474.9 L944.6 472.1 L945.8 472.8 L944.7 473.8 L946.3 474.9 L949.2 476.0 L949.5 480.0 L947.6 480.2 L949.5 481.1 L952.4 481.7 L954.8 480.8 L956.7 482.6 L958.1 484.9 L959.1 485.4 L960.2 484.4 L962.3 484.6 L963.7 482.7 L964.2 482.2 L968.7 483.3 L970.3 485.4 L973.8 485.6 L974.6 487.4 L976.7 487.4 L978.6 486.8 L979.9 486.6 L979.9 488.3 L982.9 487.1 L985.0 488.3 L986.6 490.4 L988.8 492.0 L988.8 493.4 L987.2 494.2 L985.0 493.6 L984.2 494.2 L983.7 496.6 L981.8 497.3 L979.8 499.3 L977.7 499.5 L976.1 501.3 L975.4 503.0 L975.7 504.3 L974.3 505.7 L973.4 506.9 L972.6 507.6 L972.0 505.0 L972.2 502.5 L972.7 501.5 L974.3 498.7 L976.3 497.4 L976.5 496.4 L974.3 497.3 L974.2 498.5 L972.6 497.7 L971.2 499.5 L970.3 500.3 L968.7 499.6 L965.3 500.0 L963.1 502.1 L961.1 504.3 L962.2 505.1 L963.5 504.8 L964.4 505.6 L963.8 507.6 L963.9 509.6 L962.9 511.1 L961.5 512.6 L960.0 513.8 L959.3 513.5 L958.7 514.2 L958.2 514.8 L957.4 515.8 L957.0 516.1 L957.9 517.4 L958.0 518.7 L957.0 519.2 L956.3 519.3 L956.5 517.8 L955.6 517.2 L955.8 516.1 L955.3 515.8 L953.8 515.2 L952.4 516.3 L951.9 517.0 L952.6 517.6 L954.3 517.4 L954.3 517.8 L952.7 518.9 L953.1 519.5 L953.9 521.0 L954.0 521.6 L953.2 522.0 L954.0 522.3 L953.8 523.1 L952.8 524.6 L951.9 525.4 L951.1 526.2 L949.8 526.6 L948.2 527.1 L947.8 527.7 L947.5 527.0 L946.6 527.0 L945.9 527.7 L945.3 528.5 L946.0 529.5 L947.0 530.3 L947.3 531.7 L947.2 532.5 L946.0 533.1 L945.1 534.0 L944.9 533.3 L943.9 532.7 L943.5 532.1 L942.8 531.5 L942.3 531.5 L941.9 533.0 L942.5 534.2 L943.1 535.0 L943.9 535.7 L944.2 537.0 L944.5 537.8 L944.1 537.8 L943.0 537.0 L942.5 535.5 L941.4 534.3 L941.6 533.0 L941.1 530.7 L941.0 529.8 L939.8 530.2 L939.3 530.1 L939.4 529.0 L938.8 528.0 L938.2 527.4 L937.9 526.5 L937.1 526.8 L936.4 526.9 L935.4 527.2 L935.0 527.9 L934.2 528.3 L932.8 529.7 L931.7 530.4 L931.8 531.6 L931.5 533.1 L931.1 533.6 L930.7 533.9 L930.3 534.3 L929.6 533.5 L929.2 532.4 L928.7 530.9 L928.1 530.1 L927.8 528.4 L927.7 527.3 L927.5 527.3 L926.5 527.4 L925.7 526.6 L926.4 526.3 L925.3 525.8 L924.8 525.2 L923.3 525.0 L921.7 525.0 L919.5 524.7 L919.1 523.9 L918.1 524.1 L917.2 523.9 L916.3 523.4 L915.6 522.1 L915.0 522.0 L914.5 522.4 L914.9 523.1 L915.7 524.1 L916.0 525.2 L916.5 525.5 L916.2 524.5 L916.5 524.5 L916.9 525.5 L917.7 525.6 L918.8 524.7 L919.0 524.3 L919.1 525.4 L920.2 525.9 L920.8 526.5 L920.1 527.7 L919.7 528.4 L919.0 529.0 L918.3 529.5 L916.8 530.1 L915.1 531.0 L913.2 531.7 L912.1 531.8 L911.8 530.7 L911.7 529.9 L910.8 528.4 L909.8 527.2 L909.5 525.9 L908.8 525.1 L907.9 523.3 L907.5 522.4 L907.2 521.4 L907.5 520.5 L908.1 519.0 L908.1 517.9 L907.3 518.0 L906.3 518.3 L905.2 517.9 L904.4 518.1 L903.5 517.8 L902.9 516.6 L903.2 515.6 L904.4 515.1 L905.6 515.0 L906.7 514.4 L907.7 514.4 L908.4 514.9 L909.5 515.2 L911.1 514.7 L911.1 513.9 L910.2 513.3 L909.0 512.5 L908.6 511.9 L908.9 511.1 L909.5 510.7 L907.7 511.3 L908.4 512.0 L907.8 512.2 L906.9 512.7 L906.3 511.9 L906.7 511.5 L905.9 511.3 L905.3 511.1 L904.8 512.1 L904.2 512.6 L903.9 513.5 L903.6 514.0 L903.9 514.5 L904.3 514.9 L903.6 515.2 L902.9 515.4 L902.2 515.2 L901.6 515.3 L901.8 515.7 L901.4 515.6 L901.0 515.5 L901.3 516.4 L901.7 517.1 L901.3 517.2 L901.2 518.1 L900.9 518.1 L900.5 517.8 L900.3 517.3 L900.2 516.8 L899.6 516.0 L899.3 515.5 L899.3 514.7 L899.0 514.3 L898.2 513.7 L897.4 513.2 L896.9 512.4 L896.5 512.1 L896.2 512.2 L896.2 511.7 L895.5 511.9 L895.5 512.8 L896.2 513.3 L896.5 514.2 L897.4 514.5 L897.4 514.8 L898.8 515.6 L898.7 515.9 L898.0 515.4 L897.8 516.0 L898.0 516.4 L897.7 516.8 L897.3 517.1 L897.3 516.0 L896.8 515.4 L895.6 514.7 L894.8 514.1 L894.5 513.7 L894.3 513.0 L893.6 512.7 L892.9 513.1 L892.2 513.6 L891.2 513.4 L890.6 513.5 L890.6 514.1 L890.6 514.5 L890.0 514.9 L889.3 515.2 L888.7 516.1 L889.0 516.6 L888.5 517.3 L887.9 517.8 L886.6 518.0 L886.0 518.3 L885.5 518.1 L884.9 517.6Z" fill="#cfe4f3"/><path d="M790.1 487.1 L792.8 488.0 L795.4 490.3 L798.1 492.1 L797.9 493.1 L796.8 494.5 L795.4 493.9 L793.8 493.1 L792.8 493.9 L791.7 495.4 L790.1 496.7Z" fill="#cfe4f3"/><path d="M886.0 508.3 L887.3 507.8 L889.5 507.4 L889.8 506.1 L889.0 505.7 L888.6 504.6 L888.0 503.5 L887.7 501.7 L887.0 501.6 L887.3 500.7 L886.2 500.7 L885.7 501.8 L886.0 503.2 L886.3 504.3 L887.3 505.0 L887.2 505.6 L886.5 505.7 L886.7 506.6 L886.1 506.9 L887.0 507.2 L886.5 507.6Z" fill="#cfe4f3"/><path d="M883.6 506.9 L885.5 506.6 L885.7 505.4 L885.9 504.5 L885.0 503.8 L884.4 504.6 L883.6 505.0 L883.8 505.9Z" fill="#cfe4f3"/><path d="M895.6 517.1 L897.2 517.0 L897.0 517.9 L895.6 517.4Z" fill="#cfe4f3"/><path d="M893.3 515.1 L894.1 515.1 L894.0 516.3 L893.4 516.4Z" fill="#cfe4f3"/><path d="M893.5 514.0 L894.0 513.7 L893.9 514.7 L893.5 514.6Z" fill="#cfe4f3"/><path d="M901.5 518.7 L902.9 518.9 L902.8 519.0 L901.5 518.9Z" fill="#cfe4f3"/><path d="M906.1 519.0 L907.4 518.6 L907.0 519.1 L906.3 519.2Z" fill="#cfe4f3"/><path d="M958.4 520.2 L958.9 521.3 L959.4 520.3 L960.7 519.7 L961.3 520.0 L962.1 519.3 L963.1 519.0 L964.1 518.6 L964.2 516.9 L964.7 516.0 L964.4 514.9 L963.7 515.4 L963.6 516.8 L962.3 517.8 L961.5 518.5 L959.9 518.7 L958.9 519.5Z" fill="#cfe4f3"/><path d="M963.8 514.5 L964.3 513.5 L964.6 511.9 L966.5 513.0 L965.4 514.4 L964.2 514.0Z" fill="#cfe4f3"/><path d="M964.7 511.5 L965.5 510.9 L965.3 508.8 L966.1 509.2 L965.3 506.7 L965.4 504.7 L964.7 505.4 L964.6 508.4Z" fill="#cfe4f3"/><path d="M953.5 525.0 L954.0 525.2 L953.4 526.8 L953.0 526.1Z" fill="#cfe4f3"/><path d="M946.9 528.3 L947.9 527.9 L948.2 528.1 L947.6 528.8 L946.9 528.7Z" fill="#cfe4f3"/><path d="M931.6 533.4 L932.6 534.6 L931.9 535.4 L931.5 534.3Z" fill="#cfe4f3"/><path d="M939.8 535.6 L941.2 536.4 L942.6 537.5 L944.3 539.0 L945.5 540.2 L945.3 541.5 L944.7 541.5 L943.4 540.5 L942.3 539.3 L941.5 537.7Z" fill="#cfe4f3"/><path d="M945.1 542.0 L946.8 541.9 L948.2 541.9 L950.0 542.5 L949.9 543.0 L947.6 542.7 L945.8 542.3Z" fill="#cfe4f3"/><path d="M947.1 537.6 L948.4 537.0 L949.5 536.4 L950.8 535.0 L951.6 535.1 L952.4 535.8 L951.8 536.4 L951.9 538.0 L951.6 538.9 L951.0 540.3 L950.0 540.6 L948.4 540.2 L947.6 539.3 L947.1 538.3Z" fill="#cfe4f3"/><path d="M952.7 538.1 L953.5 537.9 L955.5 537.7 L954.8 538.3 L953.2 538.3 L953.8 539.0 L954.7 538.9 L954.0 539.5 L954.5 540.6 L953.8 540.9 L953.5 540.1 L953.1 541.4 L952.7 541.3 L952.6 540.2 L952.3 539.9 L952.9 538.6Z" fill="#cfe4f3"/><path d="M958.9 538.9 L960.5 538.9 L961.0 540.2 L962.5 539.3 L964.2 539.9 L966.1 540.5 L966.9 541.4 L967.8 541.9 L967.4 542.1 L968.2 543.2 L969.3 544.0 L967.7 543.7 L966.1 542.5 L965.3 543.2 L964.2 543.2 L963.1 542.7 L962.6 542.3 L963.0 542.0 L962.5 541.2 L961.3 540.8 L959.9 540.6 L959.4 540.0Z" fill="#cfe4f3"/><path d="M968.2 541.4 L969.8 540.7 L970.2 540.8 L969.5 541.6 L968.2 541.6Z" fill="#cfe4f3"/><path d="M953.2 528.7 L954.2 528.8 L954.0 530.0 L953.8 531.0 L955.1 531.7 L955.0 531.8 L954.0 531.3 L953.3 531.0 L953.0 530.1Z" fill="#cfe4f3"/><path d="M954.0 532.3 L955.4 531.9 L955.9 532.7 L955.1 533.3 L954.3 533.3Z" fill="#cfe4f3"/><path d="M954.0 534.9 L954.8 534.0 L955.9 533.4 L956.5 534.7 L955.9 535.5 L955.1 535.2Z" fill="#cfe4f3"/><path d="M951.5 534.2 L952.7 532.9 L952.8 533.1 L951.7 534.3Z" fill="#cfe4f3"/><path d="M951.9 542.9 L954.6 542.8 L956.7 542.9 L955.6 543.6 L953.0 543.6Z" fill="#cfe4f3"/><path d="M957.0 537.5 L957.6 537.7 L957.3 538.9 L956.9 538.2Z" fill="#cfe4f3"/><path d="M956.2 540.2 L958.7 540.1 L958.6 540.5 L956.7 540.4Z" fill="#cfe4f3"/><path d="M949.5 550.2 L949.9 552.5 L949.5 553.7 L950.3 555.5 L950.3 557.5 L951.9 558.0 L953.0 557.3 L954.8 557.3 L956.2 556.3 L957.8 555.9 L959.1 555.8 L960.5 556.5 L961.3 557.8 L962.3 556.7 L962.6 558.3 L963.5 558.9 L964.2 560.0 L965.5 560.4 L966.9 560.6 L967.9 559.8 L969.0 559.4 L969.5 557.3 L970.3 556.1 L970.9 554.0 L970.6 552.2 L969.5 551.1 L968.7 550.2 L967.9 549.1 L967.0 548.6 L966.6 547.2 L966.3 546.3 L965.6 546.0 L965.0 544.1 L964.6 545.3 L964.5 546.9 L963.9 547.7 L963.1 547.5 L962.3 546.9 L961.3 546.4 L961.9 544.9 L961.0 544.9 L959.7 544.4 L958.6 545.1 L958.1 546.4 L957.1 545.9 L956.2 545.9 L955.4 547.0 L954.2 547.7 L953.8 548.8 L952.2 549.3 L950.8 549.7Z" fill="#cfe4f3"/><path d="M966.2 561.8 L968.0 561.8 L967.9 563.5 L966.9 563.7 L966.4 562.8Z" fill="#cfe4f3"/><path d="M981.2 557.6 L982.0 558.3 L982.6 559.1 L984.0 559.6 L984.1 560.2 L983.4 560.9 L983.0 561.9 L982.4 562.3 L982.2 561.2 L981.7 560.8 L982.2 559.9 L982.1 558.9Z" fill="#cfe4f3"/><path d="M981.1 561.6 L981.9 562.4 L981.2 563.9 L980.4 564.4 L979.9 565.5 L978.9 566.0 L977.8 565.5 L978.6 564.2 L979.9 563.3 L980.7 562.1Z" fill="#cfe4f3"/><path d="M976.5 549.2 L978.1 550.2 L977.8 550.5 L976.5 549.6Z" fill="#cfe4f3"/><path d="M983.6 547.7 L984.3 547.7 L984.2 548.1 L983.6 548.1Z" fill="#cfe4f3"/><path d="M916.4 484.4 L919.6 485.7 L918.5 481.9 L920.9 477.1 L925.5 474.2 L924.1 473.3 L919.9 476.0 L917.7 481.0Z" fill="#cfe4f3"/><path d="M914.0 465.0 L918.3 465.9 L922.0 463.4 L919.9 460.7 L915.6 462.8Z" fill="#cfe4f3"/><path d="M939.6 468.8 L942.3 464.4 L945.0 468.8 L942.3 471.4Z" fill="#cfe4f3"/><path d="M962.1 477.1 L964.7 475.6 L968.5 477.5 L965.8 478.7 L963.7 479.1Z" fill="#cfe4f3"/><path d="M984.2 484.4 L985.8 484.4 L985.6 485.4 L984.3 485.4Z" fill="#cfe4f3"/><path d="M966.9 512.6 L969.0 511.5 L971.1 509.2 L970.9 509.2 L968.7 511.5 L966.9 512.4Z" fill="#cfe4f3"/><path d="M813.6 487.4 L816.3 488.3 L820.5 486.3 L823.8 487.1 L827.5 488.6 L831.2 489.7 L834.4 489.7 L837.1 489.0 L837.9 484.4 L839.2 486.8 L840.8 488.6 L842.4 489.7 L843.2 487.2 L845.1 487.5 L845.4 490.4 L843.0 492.0 L842.2 494.5 L839.8 496.0 L838.4 498.7 L838.4 500.6 L839.5 502.3 L841.9 503.0 L843.5 503.8 L845.0 504.0 L845.0 505.9 L846.2 507.3 L846.7 506.7 L846.9 504.6 L847.9 502.7 L847.0 500.6 L847.5 498.4 L847.2 496.7 L849.4 496.8 L851.5 498.2 L851.8 500.5 L853.1 501.0 L854.2 498.9 L855.8 501.8 L856.9 503.8 L858.5 505.4 L859.1 506.7 L857.4 508.1 L854.7 508.1 L853.1 509.0 L854.2 509.7 L854.5 511.3 L856.3 511.9 L855.0 512.5 L853.7 513.3 L853.5 512.5 L853.1 512.1 L852.7 510.7 L851.9 510.4 L851.0 512.2 L848.9 512.2 L848.0 513.0 L846.7 513.4 L846.7 513.8 L844.8 514.4 L844.8 512.0 L843.8 511.1 L841.6 509.7 L840.0 509.9 L838.1 509.2 L823.1 509.2 L822.1 508.4 L820.5 507.6 L819.5 504.6 L819.5 503.8 L817.9 502.3 L816.5 499.8 L815.5 500.4 L814.4 499.4 L813.6 498.9Z" fill="#b9d7ee"/><path d="M823.0 509.7 L821.9 509.3 L820.4 507.9 L821.6 508.1Z" fill="#b9d7ee"/><path d="M857.2 510.1 L859.0 510.7 L860.6 510.9 L860.6 509.6 L859.3 508.4 L859.0 507.2 L858.2 508.0Z" fill="#b9d7ee"/><path d="M856.1 491.7 L854.2 495.6 L852.6 496.6 L850.5 495.1 L847.5 494.5 L849.4 493.0 L849.9 489.7 L847.2 486.8 L843.5 486.8 L841.1 484.4 L841.4 481.0 L845.6 480.6 L848.3 482.2 L851.5 485.6 L853.1 488.3Z" fill="#b9d7ee"/><path d="M842.4 493.0 L844.0 492.6 L845.9 494.8 L844.6 495.8 L843.0 494.8Z" fill="#b9d7ee"/><path d="M834.4 488.9 L831.2 488.9 L828.6 489.1 L826.4 487.4 L825.4 484.4 L826.2 481.9 L830.2 481.3 L832.8 481.9 L834.7 484.4 L835.2 487.1Z" fill="#b9d7ee"/><path d="M821.9 484.1 L822.4 479.5 L826.2 479.5 L827.2 481.3 L825.1 484.4 L823.5 485.1Z" fill="#b9d7ee"/><path d="M840.8 474.9 L847.2 475.4 L850.5 470.6 L855.8 460.0 L854.2 456.1 L846.2 455.2 L839.8 461.1 L841.9 468.8Z" fill="#b9d7ee"/><path d="M837.6 477.7 L841.9 479.3 L846.2 479.1 L846.4 476.7 L843.0 474.9 L839.2 474.0Z" fill="#b9d7ee"/><path d="M825.9 477.7 L829.1 479.3 L832.8 478.9 L836.0 478.3 L837.1 475.1 L833.4 473.8 L830.2 474.5 L827.0 474.2Z" fill="#b9d7ee"/><path d="M834.2 484.3 L836.6 484.8 L838.7 483.9 L840.6 482.7 L840.8 480.0 L838.2 479.7 L835.0 480.0Z" fill="#b9d7ee"/><path d="M835.5 472.4 L841.9 471.4 L843.0 464.1 L837.6 462.8Z" fill="#b9d7ee"/><path d="M835.5 488.7 L837.6 489.0 L837.9 487.1 L836.0 486.8Z" fill="#b9d7ee"/><path d="M846.2 490.7 L848.3 491.1 L848.9 489.3 L847.2 488.9Z" fill="#b9d7ee"/><path d="M925.3 525.8 L926.5 525.4 L926.3 523.6 L927.6 522.1 L928.4 521.5 L928.6 520.3 L929.5 519.2 L930.6 518.9 L931.1 520.6 L932.2 522.0 L931.7 522.9 L933.2 523.6 L934.6 524.1 L935.9 524.2 L936.3 523.7 L938.0 523.9 L939.9 522.9 L940.7 523.3 L940.3 523.9 L939.4 525.2 L938.7 525.6 L938.5 526.8 L938.2 525.9 L937.7 525.6 L938.0 525.0 L936.9 524.9 L936.2 524.3 L935.9 525.4 L936.3 526.2 L936.4 526.9 L935.4 527.2 L935.0 527.9 L934.2 528.3 L932.8 529.7 L931.7 530.4 L931.8 531.6 L931.5 533.1 L931.1 533.6 L930.7 533.9 L930.3 534.3 L929.6 533.5 L929.2 532.4 L928.7 530.9 L928.1 530.1 L927.8 528.4 L927.7 527.3 L927.5 527.3 L926.5 527.4 L925.7 526.6 L926.4 526.3Z" fill="#b2d3ef"/><path d="M876.1 493.0 L877.2 491.8 L880.4 491.8 L881.6 493.6 L880.4 494.8 L878.2 495.5 L876.8 495.1Z" fill="#ececec"/><path d="M894.8 467.4 L896.9 465.9 L900.6 465.0 L903.3 465.9 L900.6 470.6 L898.5 474.2 L896.9 473.8 L895.3 470.1Z" fill="#ececec"/><g fill="none" stroke="#b6d0e5" stroke-width=".4"><path d="M903.6 486.8 L904.4 492.4 L904.9 496.6 L903.9 499.3 L903.9 502.7 L901.7 505.0 L901.4 507.2 L901.7 510.0 L903.3 509.7 L904.9 511.1"/><path d="M904.9 506.7 L907.6 507.6 L910.3 508.6 L910.3 510.4 L909.5 510.7"/><path d="M914.3 513.7 L914.0 510.0 L915.6 507.2 L918.3 507.6 L921.5 505.0 L925.7 503.8 L929.5 505.0 L931.6 507.6 L935.4 509.0"/><path d="M935.4 509.0 L938.0 507.7 L941.2 506.7 L943.5 508.0 L946.6 508.7 L949.8 508.2 L951.8 508.8 L953.0 506.3 L955.6 505.7 L958.6 509.2 L961.0 509.7 L960.0 512.2 L958.9 513.8"/><path d="M935.4 509.0 L937.5 511.9 L940.2 513.8 L945.0 514.5 L948.4 513.1 L950.8 511.5 L952.8 510.7 L951.8 508.8"/><path d="M917.2 514.4 L918.8 512.2 L920.4 511.9 L922.0 513.3 L924.1 514.4 L925.2 515.1 L926.8 514.2 L928.9 513.8 L931.7 514.3 L931.6 512.2 L933.0 512.0 L933.2 510.6 L934.6 510.7 L935.4 509.0"/><path d="M931.7 514.3 L929.5 515.6 L928.4 516.8 L928.9 517.8 L930.6 518.9"/><path d="M940.7 523.3 L941.6 523.6 L941.6 525.6 L942.8 527.0 L943.5 526.5 L945.1 526.0 L945.9 526.8 L946.6 527.0"/><path d="M921.6 518.7 L921.4 521.2 L921.9 522.3 L922.7 524.1 L921.7 525.0"/><path d="M912.8 516.0 L912.6 517.6 L913.5 518.9 L913.3 520.0 L914.4 521.5 L914.8 522.1"/><path d="M908.1 517.9 L909.2 517.9 L911.5 517.6 L912.8 517.6"/><path d="M907.5 522.4 L909.7 520.8 L911.3 521.4 L913.7 522.7 L914.5 522.4"/><path d="M888.1 513.3 L890.6 514.1"/><path d="M890.2 507.5 L892.1 508.8 L893.3 509.2 L892.9 510.3 L892.2 511.2 L892.6 511.6 L892.9 513.1"/><path d="M896.4 505.0 L896.8 507.6 L895.4 508.1 L896.3 509.4 L895.8 510.4 L894.0 510.4 L892.9 510.3"/><path d="M901.7 505.0 L901.4 507.2 L900.9 509.1 L899.0 508.8 L896.8 507.6"/><path d="M884.3 523.6 L884.3 523.7 L886.3 525.1 L889.5 527.3 L890.7 528.2 L891.1 528.3 L891.0 529.8 L889.2 530.6 L886.0 530.3 L886.0 529.8 L885.7 525.4"/><path d="M895.0 520.2 L894.0 522.0 L894.2 525.4 L895.3 525.9"/><path d="M902.2 521.2 L902.2 526.8 L902.2 527.9 L901.7 528.2"/><path d="M902.2 526.8 L905.6 526.8 L908.6 526.8"/><path d="M901.7 534.1 L903.6 533.5 L906.5 532.1 L908.4 530.6 L907.0 533.5 L908.1 536.1 L911.3 536.5 L914.5 534.3"/><path d="M895.5 541.6 L897.7 541.6 L900.6 544.3 L901.7 545.1 L904.4 545.5 L905.3 542.8 L904.6 540.8 L905.3 539.0 L907.1 539.0 L909.8 540.9"/><path d="M899.6 554.0 L902.4 552.3 L905.6 550.5 L906.4 552.4"/><path d="M851.8 547.7 L852.6 545.1 L851.3 543.5 L849.5 542.3 L851.5 540.7 L851.6 539.1 L853.1 537.9 L855.0 536.4 L856.5 535.8 L858.7 537.5 L861.3 536.3"/><path d="M858.1 555.0 L860.3 552.6 L859.7 552.3 L857.8 549.2 L856.9 547.1 L854.0 543.6 L851.8 544.3"/><path d="M851.5 548.2 L852.6 550.8 L851.5 557.0 L850.7 561.2 L850.5 569.0 L852.4 570.6"/><path d="M855.4 550.3 L857.9 553.3 L858.1 555.0 L857.7 557.3"/><path d="M846.8 537.7 L848.7 538.6 L847.1 540.3 L846.2 540.2"/><path d="M850.5 532.1 L850.2 534.6 L852.9 535.3 L853.1 537.9"/><path d="M839.7 530.9 L840.3 529.1 L841.3 529.1 L841.7 529.1"/></g><path d="M896.4 526.2 L901.7 528.2 L901.7 534.1 L899.0 534.3 L897.2 533.3 L896.1 531.4 L891.0 531.4 L889.2 530.6 L891.0 528.2 L895.3 525.9Z" fill="#ececec" stroke="#e2e6ea"/><path d="M896.9 534.6 L900.9 532.7 L903.5 535.8 L900.6 536.4 L898.8 536.7 L897.4 537.4 L896.6 535.9Z" fill="#ececec" stroke="#e2e6ea"/><path d="M879.8 527.3 L882.0 527.3 L884.3 523.6 L882.0 523.5 L881.2 524.5 L880.4 525.9Z" fill="#ececec" stroke="#e2e6ea"/><path d="M894.0 538.0 L896.4 537.4 L896.6 539.5 L895.6 541.1 L895.0 540.6 L893.9 539.3Z" fill="#ececec" stroke="#e2e6ea"/><path d="M895.3 547.6 L900.1 548.0 L902.2 547.9 L899.6 550.2 L899.6 554.0 L898.0 554.0 L896.9 552.5 L896.6 550.5Z" fill="#ececec" stroke="#e2e6ea"/><path d="M908.4 530.6 L909.5 529.0 L911.9 531.8 L911.3 532.0 L910.3 530.9Z" fill="#ececec" stroke="#e2e6ea"/><path d="M917.2 514.4 L918.8 514.9 L920.1 513.9 L921.5 514.9 L924.4 517.6 L921.6 518.7 L917.7 517.6 L917.2 516.1Z" fill="#ececec" stroke="#e2e6ea"/><path d="M955.3 515.8 L956.2 514.5 L958.2 514.0 L958.7 514.2 L958.2 514.8 L957.4 515.8 L957.0 516.1 L956.6 517.1 L955.6 517.2 L955.8 516.1Z" fill="#ececec" stroke="#e2e6ea"/><path d="M914.0 512.2 L915.6 511.0 L917.2 511.1 L916.1 512.6 L917.2 514.4 L917.7 515.8 L917.6 517.6 L916.1 517.9 L915.1 517.3 L915.3 515.4 L914.3 513.7Z" fill="#fff"/><path d="M839.8 510.9 L841.9 509.3 L843.8 510.7 L842.4 511.1Z" fill="#fff"/><path d="M842.0 514.4 L842.8 514.4 L843.5 511.7 L842.2 511.9Z" fill="#fff"/><path d="M844.0 511.5 L845.6 511.5 L846.2 512.6 L844.8 513.5 L844.3 512.6Z" fill="#fff"/><path d="M920.1 511.1 L921.5 511.3 L921.2 513.0 L920.1 512.6Z" fill="#fff"/><path d="M944.4 507.2 L945.5 506.3 L947.4 503.7 L947.5 503.7 L946.0 506.3Z" fill="#fff"/><path d="M813.6 487.4 L813.6 498.9 L814.4 499.4 L815.5 500.4 L816.5 499.8 L817.9 502.3 L819.5 503.8 L818.7 504.1 L817.3 502.3 L816.0 501.1 L814.1 499.6 L812.0 499.3 L809.9 498.7 L808.0 500.1 L806.7 501.8 L805.1 502.7 L802.9 503.9 L800.8 504.6 L801.9 503.7 L804.3 501.8 L804.8 500.6 L802.4 500.6 L802.4 499.3 L800.5 497.7 L801.1 496.0 L802.9 495.1 L802.7 494.2 L800.0 494.0 L799.2 492.9 L801.6 491.7 L801.3 490.4 L800.0 489.1 L801.9 487.5 L805.1 484.9 L807.7 485.6 L810.9 486.5Z" fill="#0f7cc4" stroke="#0f7cc4" stroke-width=".3"/><path d="M800.8 504.5 L799.2 505.4 L797.1 506.2 L794.9 506.7 L797.1 506.6 L799.2 505.7 L800.8 504.8Z" fill="#0f7cc4" stroke="#0f7cc4" stroke-width=".3"/><path d="M823.1 509.2 L838.1 509.2 L840.0 509.9 L841.6 509.7 L843.8 511.1 L844.8 512.0 L844.8 514.4 L846.7 513.8 L846.7 513.4 L848.0 513.0 L848.9 512.2 L851.0 512.2 L851.9 510.4 L852.7 510.7 L853.1 512.1 L853.1 512.5 L851.5 513.3 L851.1 514.4 L851.5 514.6 L850.5 514.9 L849.4 515.4 L849.2 516.1 L848.6 516.8 L848.3 517.8 L848.5 518.7 L847.8 519.3 L846.7 520.1 L845.6 521.0 L845.5 522.1 L846.1 523.9 L846.0 524.9 L845.5 525.0 L844.7 523.5 L844.7 522.6 L844.0 522.1 L843.2 522.3 L842.2 522.0 L841.1 522.0 L841.2 522.6 L840.0 522.4 L838.7 522.4 L837.4 523.1 L836.9 524.5 L835.9 524.2 L834.9 522.3 L833.9 522.7 L833.0 522.0 L832.0 521.0 L831.1 521.0 L831.1 521.3 L829.6 521.3 L827.6 520.6 L826.4 520.6 L825.6 519.7 L824.5 519.3 L823.8 517.9 L823.2 516.9 L822.6 515.6 L822.5 513.7 L822.7 511.3 L822.3 509.7 L823.1 509.7Z" fill="#0f7cc4" stroke="#0f7cc4" stroke-width=".3"/><path d="M805.5 527.7 L806.2 528.1 L805.8 528.5 L805.5 528.1Z" fill="#0f7cc4" stroke="#0f7cc4" stroke-width=".3"/></g>
<!--/MAP-->
</svg>

<div class="t" style="left:15.40px;top:49.33px;font-size:12.6px;color:#1f3b78;font-weight:bold;letter-spacing:-0.057px;">databloo</div>
<div class="t" style="left:8.90px;top:149.89px;font-size:8.4px;color:#5a5a5a;font-weight:bold;letter-spacing:-0.173px;">Google Analytics</div>
<div class="t" style="left:11.90px;top:223.19px;font-size:8.4px;color:#5a5a5a;font-weight:bold;letter-spacing:-0.277px;">Search Console</div>
<div class="t" style="left:10.40px;top:296.19px;font-size:8.4px;color:#5a5a5a;font-weight:bold;letter-spacing:-0.280px;">Business Profile</div>
<div class="t" style="left:19.40px;top:368.69px;font-size:8.4px;color:#5a5a5a;font-weight:bold;letter-spacing:-0.222px;">Google Ads</div>
<div class="t" style="left:13.90px;top:440.89px;font-size:8.4px;color:#5a5a5a;font-weight:bold;letter-spacing:-0.164px;">Facebook Ads</div>
<div class="t" style="left:103.40px;top:148.14px;font-size:8.1px;color:#fff;letter-spacing:0.086px;">Overview</div>
<div class="t" style="left:105.40px;top:221.04px;font-size:8.1px;color:#547dae;letter-spacing:0.233px;">Content</div>
<div class="t" style="left:95.90px;top:294.44px;font-size:8.1px;color:#547dae;letter-spacing:0.311px;">Engagement</div>
<div class="t" style="left:98.40px;top:366.34px;font-size:8.1px;color:#547dae;">Conversions</div>
<div class="t" style="left:103.40px;top:439.54px;font-size:8.1px;color:#547dae;letter-spacing:0.086px;">Channels</div>
<div class="t" style="left:111.40px;top:512.24px;font-size:8.1px;color:#547dae;letter-spacing:0.333px;">Time</div>
<div class="t" style="left:111.40px;top:555.50px;font-size:8.5px;color:#7c9cc6;letter-spacing:0.333px;">Year</div>
<div class="t" style="left:105.40px;top:616.03px;font-size:9.3px;color:#fff;font-weight:bold;letter-spacing:0.320px;">Period</div>
<div class="t" style="left:183.40px;top:11.29px;font-size:17.5px;color:#111;font-weight:bold;letter-spacing:0.886px;">Overview</div>
<div class="t" style="left:497.90px;top:14.58px;font-size:9px;color:#8a8f96;letter-spacing:0.029px;">Glossary</div>
<div class="t" style="left:570.40px;top:14.58px;font-size:9px;color:#8a8f96;letter-spacing:0.300px;">Share</div>
<div class="t" style="left:637.40px;top:14.58px;font-size:9px;color:#8a8f96;letter-spacing:0.400px;">Export</div>
<div class="t" style="left:723.40px;top:14.21px;font-size:9.2px;color:#1c1c1c;letter-spacing:0.325px;">shop.merch.google</div>
<div class="t" style="left:866.90px;top:14.81px;font-size:9.2px;color:#333;letter-spacing:-0.080px;">Aug 1, 2024 - Aug 31, 2024</div>
<div class="t" style="left:224.40px;top:63.94px;font-size:10px;color:#9a9a9a;font-weight:bold;letter-spacing:0.257px;">+ Filter</div>
<div class="t" style="left:329.40px;top:63.58px;font-size:9px;color:#222;letter-spacing:0.260px;">Conversion:</div>
<div class="t" style="left:381.40px;top:64.43px;font-size:8px;color:#555;letter-spacing:0.356px;">Key Events</div>
<div class="t" style="left:511.90px;top:63.58px;font-size:9px;color:#222;letter-spacing:0.533px;">Country</div>
<div class="t" style="left:687.40px;top:63.58px;font-size:9px;color:#222;letter-spacing:0.520px;">Device</div>
<div class="t" style="left:869.90px;top:63.58px;font-size:9px;color:#222;letter-spacing:0.633px;">Channel</div>
<div class="t" style="left:257.40px;top:119.73px;font-size:9.3px;color:#8b8b8b;letter-spacing:0.080px;">Total users</div>
<div class="t" style="left:256.40px;top:131.73px;font-size:16.5px;color:#444;letter-spacing:1.120px;">80,633</div>
<div class="t" style="left:264.90px;top:151.05px;font-size:8.8px;color:#4fa04f;letter-spacing:-0.450px;">18.0%</div>
<div class="t" style="left:336.40px;top:119.73px;font-size:9.3px;color:#8b8b8b;letter-spacing:-0.114px;">Sessions</div>
<div class="t" style="left:335.40px;top:131.73px;font-size:16.5px;color:#444;letter-spacing:0.733px;">109,794</div>
<div class="t" style="left:343.40px;top:151.05px;font-size:8.8px;color:#4fa04f;letter-spacing:-0.550px;">15.2%</div>
<div class="t" style="left:414.90px;top:119.73px;font-size:9.3px;color:#8b8b8b;letter-spacing:0.260px;">Bounce rate</div>
<div class="t" style="left:414.90px;top:131.73px;font-size:16.5px;color:#444;letter-spacing:0.400px;">47%</div>
<div class="t" style="left:423.40px;top:151.05px;font-size:8.8px;color:#ea5a4e;letter-spacing:-0.200px;">-2.7%</div>
<div class="t" style="left:494.40px;top:119.73px;font-size:9.3px;color:#8b8b8b;letter-spacing:0.040px;">Avg. session duration</div>
<div class="t" style="left:494.40px;top:131.73px;font-size:16.5px;color:#444;letter-spacing:1.000px;">00:02:56</div>
<div class="t" style="left:501.40px;top:151.05px;font-size:8.8px;color:#ea5a4e;letter-spacing:-0.350px;">-1.0%</div>
<div class="t" style="left:688.40px;top:119.73px;font-size:9.3px;color:#8b8b8b;letter-spacing:0.040px;">Conversions</div>
<div class="t" style="left:687.40px;top:131.73px;font-size:16.5px;color:#444;letter-spacing:0.367px;">109,732</div>
<div class="t" style="left:696.40px;top:151.05px;font-size:8.8px;color:#4fa04f;letter-spacing:-0.450px;">31.4%</div>
<div class="t" style="left:767.40px;top:119.73px;font-size:9.3px;color:#8b8b8b;letter-spacing:0.014px;">Conversion Rate</div>
<div class="t" style="left:767.40px;top:131.73px;font-size:16.5px;color:#444;letter-spacing:0.840px;">99.94%</div>
<div class="t" style="left:774.40px;top:151.05px;font-size:8.8px;color:#4fa04f;letter-spacing:0.050px;">14.0%</div>
<div class="t" style="left:852.90px;top:119.73px;font-size:9.3px;color:#8b8b8b;letter-spacing:0.013px;">Conversion Value</div>
<div class="t" style="left:851.90px;top:131.73px;font-size:16.5px;color:#444;letter-spacing:0.425px;">2,490,971</div>
<div class="t" style="left:860.40px;top:151.05px;font-size:8.8px;color:#4fa04f;letter-spacing:-0.500px;">18.2%</div>
<div class="t" style="left:956.40px;top:119.73px;font-size:9.3px;color:#8b8b8b;letter-spacing:-0.022px;">Avg. Value</div>
<div class="t" style="left:955.40px;top:131.73px;font-size:16.5px;color:#444;letter-spacing:0.400px;">23</div>
<div class="t" style="left:963.40px;top:151.05px;font-size:8.8px;color:#ea5a4e;letter-spacing:-0.760px;">-10.1%</div>
<div class="t" style="left:187.90px;top:209.03px;font-size:10.6px;color:#333;letter-spacing:0.210px;">Performance Over Time</div>
<div class="t" style="left:241.40px;top:238.84px;font-size:7.4px;color:#c2c2c2;letter-spacing:0.200px;">Sessions</div>
<div class="t" style="left:301.90px;top:238.84px;font-size:7.4px;color:#c9c9c9;letter-spacing:0.350px;">Sessions (previous month)</div>
<div class="t" style="left:207.90px;top:244.67px;font-size:7px;color:#555;letter-spacing:0.400px;">8K</div>
<div class="t" style="left:207.90px;top:273.87px;font-size:7px;color:#555;letter-spacing:0.400px;">6K</div>
<div class="t" style="left:207.90px;top:303.07px;font-size:7px;color:#555;letter-spacing:0.400px;">4K</div>
<div class="t" style="left:207.90px;top:332.27px;font-size:7px;color:#555;letter-spacing:0.400px;">2K</div>
<div class="t" style="left:212.90px;top:361.47px;font-size:7px;color:#555;">0</div>
<div class="t" style="left:215.40px;top:369.27px;font-size:7px;color:#555;letter-spacing:0.200px;">Aug 1</div>
<div class="t" style="left:266.20px;top:369.27px;font-size:7px;color:#555;letter-spacing:0.200px;">Aug 3</div>
<div class="t" style="left:318.00px;top:369.27px;font-size:7px;color:#555;letter-spacing:0.200px;">Aug 5</div>
<div class="t" style="left:368.80px;top:369.27px;font-size:7px;color:#555;letter-spacing:0.200px;">Aug 7</div>
<div class="t" style="left:420.60px;top:369.27px;font-size:7px;color:#555;letter-spacing:0.200px;">Aug 9</div>
<div class="t" style="left:470.40px;top:369.27px;font-size:7px;color:#555;letter-spacing:0.240px;">Aug 11</div>
<div class="t" style="left:521.20px;top:369.27px;font-size:7px;color:#555;letter-spacing:0.040px;">Aug 13</div>
<div class="t" style="left:573.00px;top:369.27px;font-size:7px;color:#555;letter-spacing:0.040px;">Aug 15</div>
<div class="t" style="left:623.80px;top:369.27px;font-size:7px;color:#555;letter-spacing:0.040px;">Aug 17</div>
<div class="t" style="left:675.60px;top:369.27px;font-size:7px;color:#555;letter-spacing:0.040px;">Aug 19</div>
<div class="t" style="left:727.40px;top:369.27px;font-size:7px;color:#555;letter-spacing:0.040px;">Aug 21</div>
<div class="t" style="left:778.20px;top:369.27px;font-size:7px;color:#555;letter-spacing:0.040px;">Aug 23</div>
<div class="t" style="left:830.00px;top:369.27px;font-size:7px;color:#555;letter-spacing:0.040px;">Aug 25</div>
<div class="t" style="left:880.80px;top:369.27px;font-size:7px;color:#555;letter-spacing:0.040px;">Aug 27</div>
<div class="t" style="left:932.60px;top:369.27px;font-size:7px;color:#555;letter-spacing:0.040px;">Aug 29</div>
<div class="t" style="left:983.40px;top:369.27px;font-size:7px;color:#555;letter-spacing:0.240px;">Aug 31</div>
<div class="t" style="left:187.40px;top:427.53px;font-size:10.6px;color:#333;letter-spacing:0.280px;">Device Breakdown</div>
<div class="t" style="left:292.90px;top:504.27px;font-size:7px;color:#55606c;letter-spacing:-0.200px;">46.8%</div>
<div class="t" style="left:215.40px;top:522.67px;font-size:7px;color:#55606c;letter-spacing:-0.200px;">44.4%</div>
<div class="t" style="left:242.90px;top:464.47px;font-size:7px;color:#fff;letter-spacing:-0.267px;">8.7%</div>
<div class="t" style="left:354.40px;top:491.17px;font-size:7px;color:#7a7a7a;">desktop</div>
<div class="t" style="left:353.40px;top:501.87px;font-size:7px;color:#7a7a7a;letter-spacing:0.240px;">mobile</div>
<div class="t" style="left:353.40px;top:512.97px;font-size:7px;color:#7a7a7a;letter-spacing:0.314px;">smart tv</div>
<div class="t" style="left:354.40px;top:523.97px;font-size:7px;color:#7a7a7a;letter-spacing:0.240px;">tablet</div>
<div class="t" style="left:218.90px;top:601.18px;font-size:15.5px;color:#444;letter-spacing:0.400px;">40.3K</div>
<div class="t" style="left:225.40px;top:619.02px;font-size:7.3px;color:#4fa04f;letter-spacing:-0.300px;">13.3%</div>
<div class="t" style="left:303.90px;top:601.18px;font-size:15.5px;color:#444;letter-spacing:-0.050px;">38.7K</div>
<div class="t" style="left:310.40px;top:619.02px;font-size:7.3px;color:#4fa04f;">36.5%</div>
<div class="t" style="left:388.40px;top:601.18px;font-size:15.5px;color:#444;letter-spacing:0.667px;">6.8K</div>
<div class="t" style="left:394.90px;top:619.02px;font-size:7.3px;color:#ea5a4e;letter-spacing:0.400px;">-2.6%</div>
<div class="t" style="left:475.40px;top:427.53px;font-size:10.6px;color:#333;letter-spacing:0.219px;">Performance By Channel</div>
<div class="t" style="left:490.90px;top:456.37px;font-size:7px;color:#333;letter-spacing:0.400px;">80K</div>
<div class="t" style="left:490.90px;top:492.87px;font-size:7px;color:#333;letter-spacing:0.400px;">60K</div>
<div class="t" style="left:490.90px;top:529.37px;font-size:7px;color:#333;letter-spacing:0.400px;">40K</div>
<div class="t" style="left:490.90px;top:565.87px;font-size:7px;color:#333;letter-spacing:0.400px;">20K</div>
<div class="t" style="left:500.40px;top:601.97px;font-size:7px;color:#333;">0</div>
<div class="t" style="left:762.90px;top:427.53px;font-size:10.6px;color:#333;letter-spacing:0.248px;">Performance By Country</div>
<div class="t" style="left:767.40px;top:591.55px;font-size:7.5px;color:#444;letter-spacing:0.350px;">United States</div>
<div class="t" style="left:767.40px;top:609.25px;font-size:7.5px;color:#444;letter-spacing:0.160px;">Canada</div>
<div class="t" style="left:766.40px;top:626.85px;font-size:7.5px;color:#444;letter-spacing:0.450px;">India</div>
<div class="t" style="left:872.90px;top:591.81px;font-size:7.2px;color:#444;letter-spacing:-0.040px;">65,815</div>
<div class="t" style="left:874.40px;top:609.51px;font-size:7.2px;color:#444;letter-spacing:-0.160px;">11,276</div>
<div class="t" style="left:875.40px;top:627.11px;font-size:7.2px;color:#444;letter-spacing:0.300px;">6,365</div>
<div class="t" style="left:978.90px;top:591.81px;font-size:7.2px;color:#444;letter-spacing:-0.350px;">11.2%</div>
<div class="t" style="left:977.40px;top:609.51px;font-size:7.2px;color:#444;letter-spacing:-0.350px;">28.0%</div>
<div class="t" style="left:978.40px;top:627.11px;font-size:7.2px;color:#444;letter-spacing:-0.400px;">13.0%</div>
</body>
</html>
